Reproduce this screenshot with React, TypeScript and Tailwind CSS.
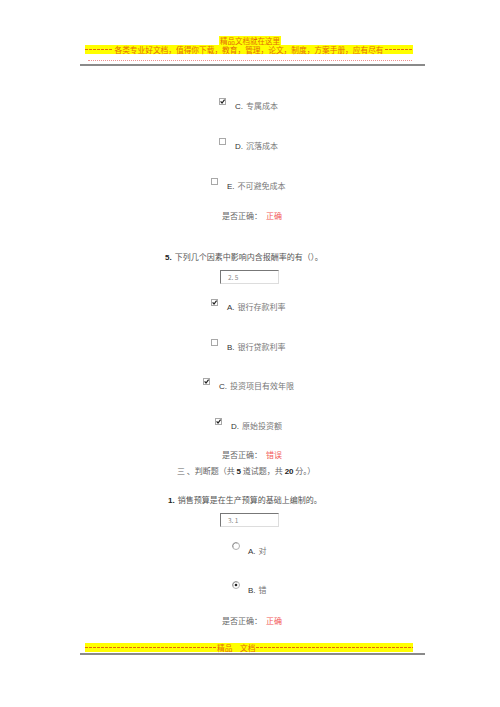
import React from 'react';

const cjk = '"Noto Sans CJK SC", "Liberation Sans", sans-serif';
const latin = { fontFamily: '"Liberation Sans", sans-serif' };

function Box({ checked }: { checked?: boolean }) {
  return (
    <svg width="7" height="7" viewBox="0 0 7 7" className="shrink-0">
      <rect x="0.5" y="0.5" width="6" height="6" fill="#fff" stroke="#a8a8a8" />
      {checked && <path d="M1.6 3.4 L3 5 L5.6 1.6" fill="none" stroke="#222" strokeWidth="1.2" />}
    </svg>
  );
}

function Radio({ checked }: { checked?: boolean }) {
  return (
    <svg width="8" height="8" viewBox="0 0 8 8" className="shrink-0">
      <circle cx="4" cy="4" r="3.5" fill="#fff" stroke="#b0b0b0" />
      <path d="M1.2 5.5 A3.2 3.2 0 0 1 5.5 1.2" fill="none" stroke="#8a8a8a" strokeWidth="0.8" />
      {checked && <circle cx="4" cy="4" r="1.3" fill="#222" />}
    </svg>
  );
}

function Label({ letter, text }: { letter: string; text: string }) {
  return (
    <span className="whitespace-nowrap">
      <span className="text-[#333]" style={latin}>{letter}.</span>
      <span className="text-[#777] ml-[3px]">{text}</span>
    </span>
  );
}

function Option({ left, mt, checked, letter, text }: { left: string; mt: string; checked?: boolean; letter: string; text: string }) {
  return (
    <div className={`flex items-start h-[13px] text-[8px] leading-[10px] ${left} ${mt}`}>
      <Box checked={checked} />
      <div className="ml-[9px] mt-[3px] h-[10px]">
        <Label letter={letter} text={text} />
      </div>
    </div>
  );
}

function Result({ mt, value }: { mt: string; value: string }) {
  return (
    <div className={`h-[10px] pl-[222px] text-[8px] leading-[10px] whitespace-nowrap ${mt}`}>
      <span className="text-[#666]">是否正确：</span>
      <span className="text-[#f25a5a] ml-[4px]">{value}</span>
    </div>
  );
}

function Input({ mt, value }: { mt: string; value: string }) {
  return (
    <div className={`pl-[220px] ${mt}`}>
      <div className="w-[59px] h-[14px] border border-t-[#777] border-l-[#777] border-r-[#ddd] border-b-[#ddd] pl-[7px] text-[6.5px] leading-[12px] text-[#888]">
        {value}
      </div>
    </div>
  );
}

function Dash({ width }: { width?: string }) {
  return (
    <span
      className={`${width ?? 'flex-1'} self-center h-[1px] bg-[repeating-linear-gradient(90deg,#e36c09_0_3px,transparent_3px_4px)]`}
    />
  );
}

export default function App() {
  return (
    <div className="w-[500px] h-[707px] bg-white overflow-hidden" style={{ fontFamily: cjk }}>
      {/* header */}
      <div className="pt-[36px]">
        <div className="flex justify-center h-[9px] overflow-hidden">
          <span className="bg-[#ffff00] text-[#e36c09] text-[7.5px] leading-[9px] px-[1px]">精品文档就在这里</span>
        </div>
        <div className="ml-[85px] w-[328px] h-[9px] bg-[#ffff00] text-[#e36c09] text-[7.7px] leading-[9px] flex whitespace-nowrap">
          <Dash />
          <span className="px-[1px]">各类专业好文档，值得你下载，教育，管理，论文，制度，方案手册，应有尽有</span>
          <Dash />
        </div>
        <div className="ml-[88px] w-[324px] mt-[6px] border-t border-dotted border-[#ee9090]" />
        <div className="ml-[80px] w-[345px] h-[2px] mt-[3px] bg-[#8a8a8a]" />
      </div>

      <Option left="pl-[219px]" mt="mt-[32px]" checked letter="C" text="专属成本" />
      <Option left="pl-[219px]" mt="mt-[27px]" letter="D" text="沉落成本" />
      <Option left="pl-[211px]" mt="mt-[27px]" letter="E" text="不可避免成本" />
      <Result mt="mt-[20px]" value="正确" />

      <div className="mt-[31px] h-[10px] pl-[165px] text-[8px] leading-[10px] whitespace-nowrap">
        <span className="font-bold text-[#222]" style={latin}>5.</span>
        <span className="text-[#555] ml-[3px]">下列几个因素中影响内含报酬率的有（）。</span>
      </div>
      <Input mt="mt-[8px]" value="2. 5" />

      <Option left="pl-[211px]" mt="mt-[15px]" checked letter="A" text="银行存款利率" />
      <Option left="pl-[211px]" mt="mt-[27px]" letter="B" text="银行贷款利率" />
      <Option left="pl-[203px]" mt="mt-[26px]" checked letter="C" text="投资项目有效年限" />
      <Option left="pl-[215px]" mt="mt-[27px]" checked letter="D" text="原始投资额" />
      <Result mt="mt-[19px]" value="错误" />

      <div className="mt-[6px] h-[10px] pl-[177px] text-[8px] leading-[10px] whitespace-nowrap text-[#666]">
        三 、判断题（共 <span className="font-bold text-[#222]" style={latin}>5</span> 道试题，共 <span className="font-bold text-[#222]" style={latin}>20</span> 分。）
      </div>

      <div className="mt-[19px] h-[10px] pl-[168px] text-[8px] leading-[10px] whitespace-nowrap">
        <span className="font-bold text-[#222]" style={latin}>1.</span>
        <span className="text-[#555] ml-[3px]">销售预算是在生产预算的基础上编制的。</span>
      </div>
      <Input mt="mt-[8px]" value="3. 1" />

      <div className="flex items-start h-[14px] pl-[232px] mt-[15px] text-[8px] leading-[10px]">
        <Radio />
        <div className="ml-[8px] mt-[4px] h-[10px]"><Label letter="A" text="对" /></div>
      </div>
      <div className="flex items-start h-[14px] pl-[232px] mt-[25px] text-[8px] leading-[10px]">
        <Radio checked />
        <div className="ml-[8px] mt-[4px] h-[10px]"><Label letter="B" text="错" /></div>
      </div>
      <Result mt="mt-[21px]" value="正确" />

      {/* footer */}
      <div className="mt-[17px] ml-[85px] w-[328px] h-[9px] bg-[#ffff00] text-[#e36c09] text-[7.7px] leading-[9px] flex whitespace-nowrap">
        <Dash width="w-[131px]" />
        <span className="px-[1px]">精品　文档</span>
        <Dash />
      </div>
      <div className="ml-[80px] w-[345px] h-[2px] mt-[1px] bg-[#8a8a8a]" />
    </div>
  );
}
